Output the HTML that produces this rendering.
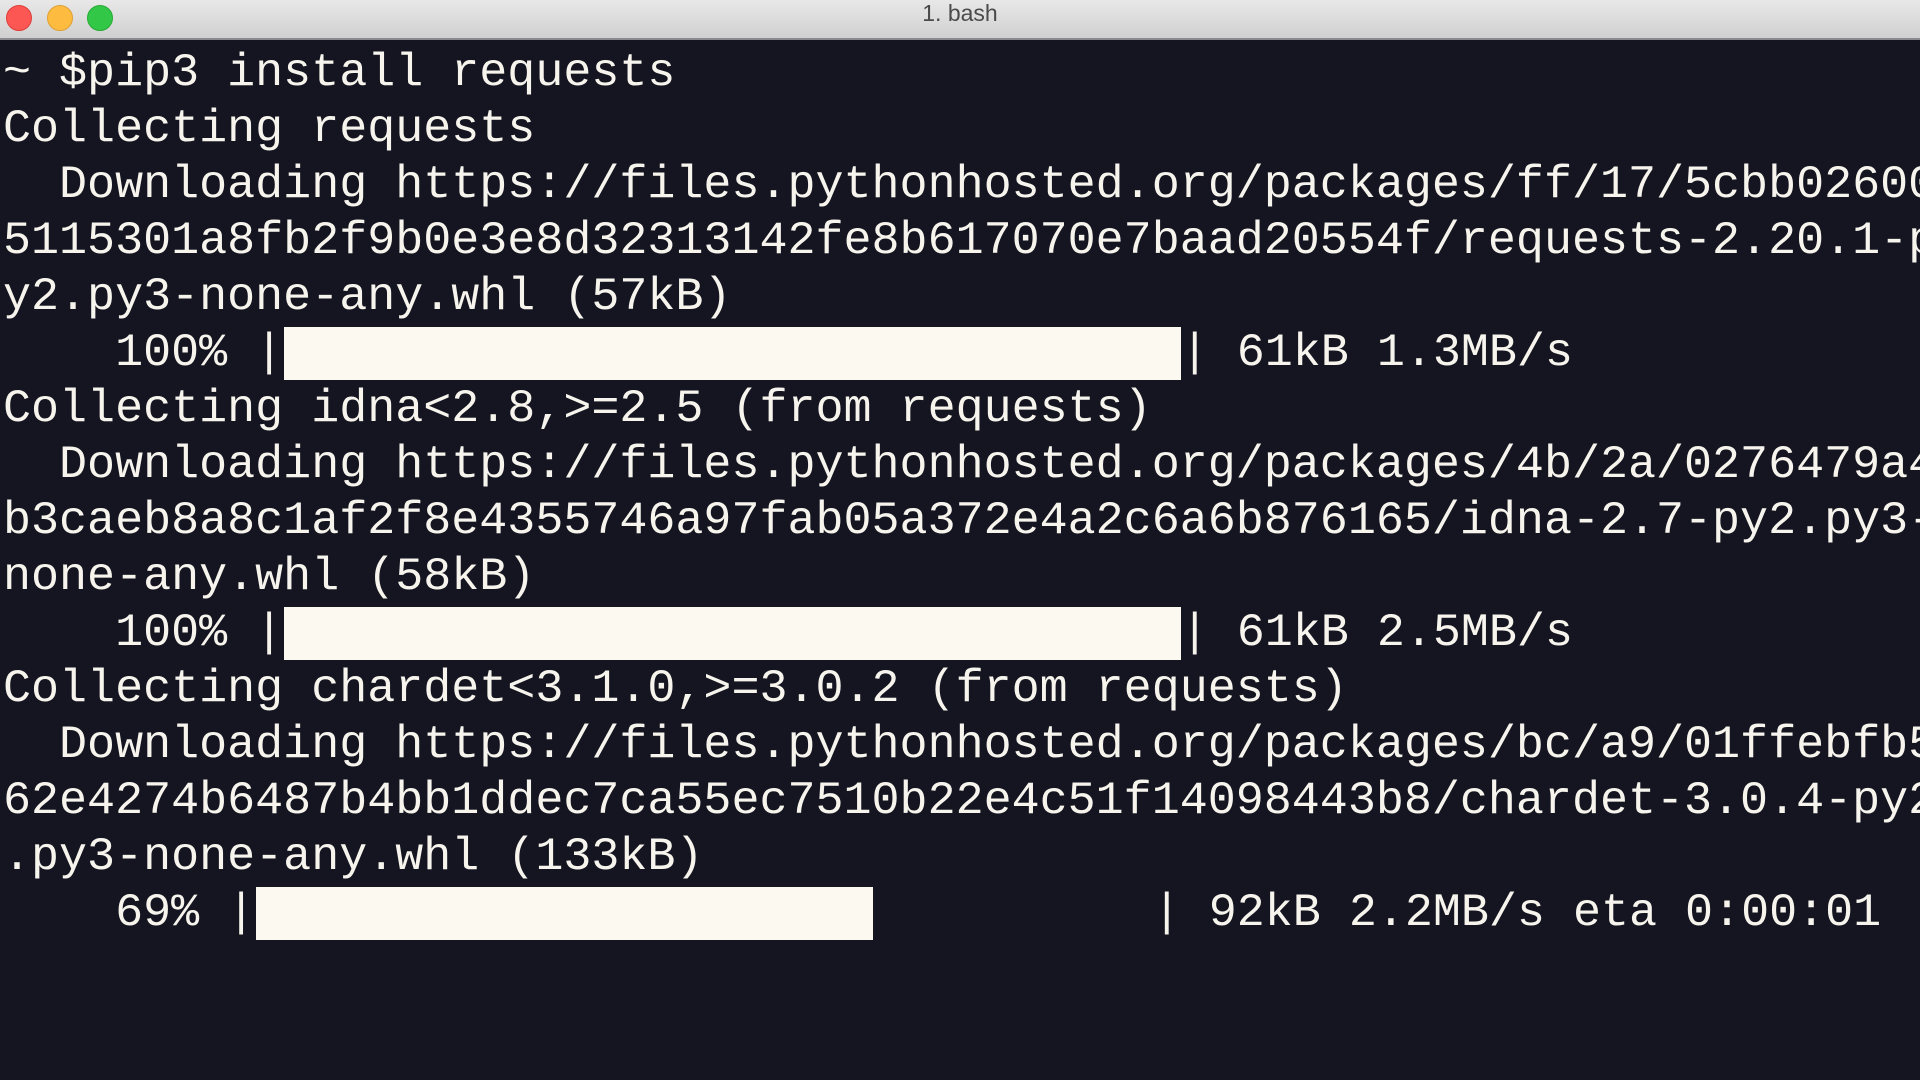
<!DOCTYPE html>
<html><head><meta charset="utf-8">
<style>
html,body{margin:0;padding:0;width:1920px;height:1080px;overflow:hidden;background:#141520;}
.tb{position:absolute;left:0;top:0;width:1920px;height:38px;background:linear-gradient(#e8e8e8,#d0d0d0);border-bottom:2px solid #8a8a8e;}
.tb .t{position:absolute;left:0;right:0;top:0;height:38px;line-height:36px;text-align:center;font:23px "Liberation Sans",sans-serif;color:#4a4a4a;}
.dot{position:absolute;top:5px;width:24px;height:24px;border-radius:50%;}
.term{position:absolute;left:3px;top:46px;width:1917px;height:1034px;overflow:hidden;font-family:"Liberation Mono",monospace;font-size:46.7px;line-height:56px;color:#f6f4ec;white-space:pre;}
.b{background:#fcfaf0;margin-left:1px;}
</style></head><body>
<div class="tb">
<div class="dot" style="left:6px;background:#fc5753;border:1px solid #de3f3a;"></div>
<div class="dot" style="left:47px;background:#fdbc40;border:1px solid #dea034;"></div>
<div class="dot" style="left:87px;background:#33c748;border:1px solid #27aa35;"></div>
<div class="t">1. bash</div>
</div>
<div class="term">~ $pip3 install requests
Collecting requests
  Downloading https://files.pythonhosted.org/packages/ff/17/5cbb026005115301a8fb
5115301a8fb2f9b0e3e8d32313142fe8b617070e7baad20554f/requests-2.20.1-py2.py3
y2.py3-none-any.whl (57kB)
    100% |<span class="b">                                </span>| 61kB 1.3MB/s
Collecting idna&lt;2.8,&gt;=2.5 (from requests)
  Downloading https://files.pythonhosted.org/packages/4b/2a/0276479a4b3cae
b3caeb8a8c1af2f8e4355746a97fab05a372e4a2c6a6b876165/idna-2.7-py2.py3-
none-any.whl (58kB)
    100% |<span class="b">                                </span>| 61kB 2.5MB/s
Collecting chardet&lt;3.1.0,&gt;=3.0.2 (from requests)
  Downloading https://files.pythonhosted.org/packages/bc/a9/01ffebfb562e42
62e4274b6487b4bb1ddec7ca55ec7510b22e4c51f14098443b8/chardet-3.0.4-py2
.py3-none-any.whl (133kB)
    69% |<span class="b">                      </span>          | 92kB 2.2MB/s eta 0:00:01
</div>
</body></html>
